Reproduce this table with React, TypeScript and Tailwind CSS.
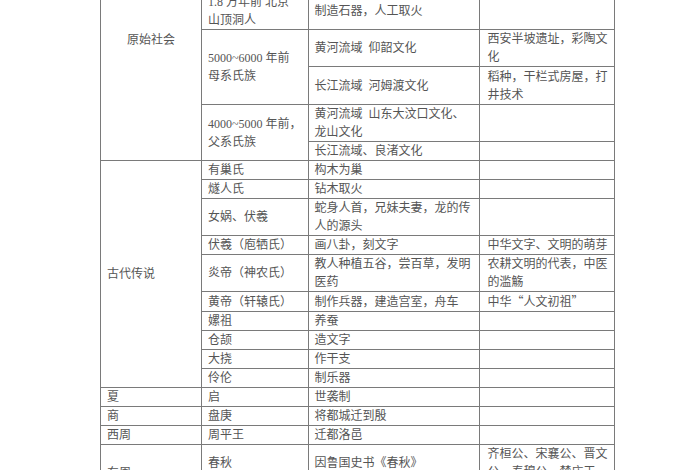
import React from "react";

const F = { fontFamily: '"Liberation Serif", "Noto Sans CJK SC", serif' };
const CJK = { fontFamily: '"Noto Sans CJK SC", sans-serif' };

const td = "border border-[#7a7a7a] px-[6px] py-0 align-middle";
const tdn = `${td} whitespace-nowrap`;
const td4 = `${td} pl-[8px]`;

export default function App() {
  return (
    <div className="w-[700px] h-[470px] overflow-hidden bg-white">
      <table
        className="ml-[100px] -mt-[82px] table-fixed border-collapse text-[12px] leading-[18px] text-[#555555]"
        style={F}
      >
        <colgroup>
          <col className="w-[101px]" />
          <col className="w-[106px]" />
          <col className="w-[171px]" />
          <col className="w-[135px]" />
        </colgroup>
        <tbody>
          <tr>
            <td rowSpan={7} className={`${td} text-center`}>原始社会</td>
            <td className={tdn}>170 万年前<br />元谋人</td>
            <td className={td}>已知最早的人类</td>
            <td className={td4}></td>
          </tr>
          <tr>
            <td className={tdn}>70~20 万年前<br />北京人</td>
            <td className={td}>使用天然火，打制石器</td>
            <td className={td4}></td>
          </tr>
          <tr>
            <td className={tdn}>1.8 万年前 北京<br />山顶洞人</td>
            <td className={td}>制造石器，人工取火</td>
            <td className={td4}></td>
          </tr>
          <tr>
            <td rowSpan={2} className={tdn}>5000~6000 年前<br />母系氏族</td>
            <td className={`${td} h-[37px]`}>黄河流域&nbsp;&nbsp;仰韶文化</td>
            <td className={td4}>西安半坡遗址，彩陶文化</td>
          </tr>
          <tr>
            <td className={`${td} h-[38px]`}>长江流域&nbsp;&nbsp;河姆渡文化</td>
            <td className={td4}>稻种，干栏式房屋，打井技术</td>
          </tr>
          <tr>
            <td rowSpan={2} className={tdn}>4000~5000 年前，<br />父系氏族</td>
            <td className={tdn}>黄河流域&nbsp;&nbsp;山东大汶口文化、<br />龙山文化</td>
            <td className={td4}></td>
          </tr>
          <tr>
            <td className={td}>长江流域、良渚文化</td>
            <td className={td4}></td>
          </tr>
          <tr>
            <td rowSpan={10} className={td}>古代传说</td>
            <td className={tdn}>有巢氏</td>
            <td className={td}>构木为巢</td>
            <td className={td4}></td>
          </tr>
          <tr>
            <td className={tdn}>燧人氏</td>
            <td className={td}>钻木取火</td>
            <td className={td4}></td>
          </tr>
          <tr>
            <td className={tdn}>女娲、伏羲</td>
            <td className={td}>蛇身人首，兄妹夫妻，龙的传人的源头</td>
            <td className={td4}></td>
          </tr>
          <tr>
            <td className={tdn}>伏羲（庖牺氏）</td>
            <td className={td}>画八卦，刻文字</td>
            <td className={td4}>中华文字、文明的萌芽</td>
          </tr>
          <tr>
            <td className={tdn}>炎帝（神农氏）</td>
            <td className={td}>教人种植五谷，尝百草，发明医药</td>
            <td className={td4}>农耕文明的代表，中医的滥觞</td>
          </tr>
          <tr>
            <td className={tdn}>黄帝（轩辕氏）</td>
            <td className={td}>制作兵器，建造宫室，舟车</td>
            <td className={td4}>
              中华<span style={CJK}>“</span>人文初祖<span style={CJK}>”</span>
            </td>
          </tr>
          <tr>
            <td className={tdn}>嫘祖</td>
            <td className={td}>养蚕</td>
            <td className={td4}></td>
          </tr>
          <tr>
            <td className={tdn}>仓颉</td>
            <td className={td}>造文字</td>
            <td className={td4}></td>
          </tr>
          <tr>
            <td className={tdn}>大挠</td>
            <td className={td}>作干支</td>
            <td className={td4}></td>
          </tr>
          <tr>
            <td className={tdn}>伶伦</td>
            <td className={td}>制乐器</td>
            <td className={td4}></td>
          </tr>
          <tr>
            <td className={td}>夏</td>
            <td className={tdn}>启</td>
            <td className={td}>世袭制</td>
            <td className={td4}></td>
          </tr>
          <tr>
            <td className={td}>商</td>
            <td className={tdn}>盘庚</td>
            <td className={td}>将都城迁到殷</td>
            <td className={td4}></td>
          </tr>
          <tr>
            <td className={td}>西周</td>
            <td className={tdn}>周平王</td>
            <td className={td}>迁都洛邑</td>
            <td className={td4}></td>
          </tr>
          <tr>
            <td rowSpan={2} className={td}>东周</td>
            <td className={tdn}>春秋</td>
            <td className={td}>因鲁国史书《春秋》</td>
            <td className={td4}>齐桓公、宋襄公、晋文公、秦穆公、楚庄王</td>
          </tr>
          <tr>
            <td className={tdn}>战国</td>
            <td className={td}>商鞅变法</td>
            <td className={td4}></td>
          </tr>
        </tbody>
      </table>
    </div>
  );
}
